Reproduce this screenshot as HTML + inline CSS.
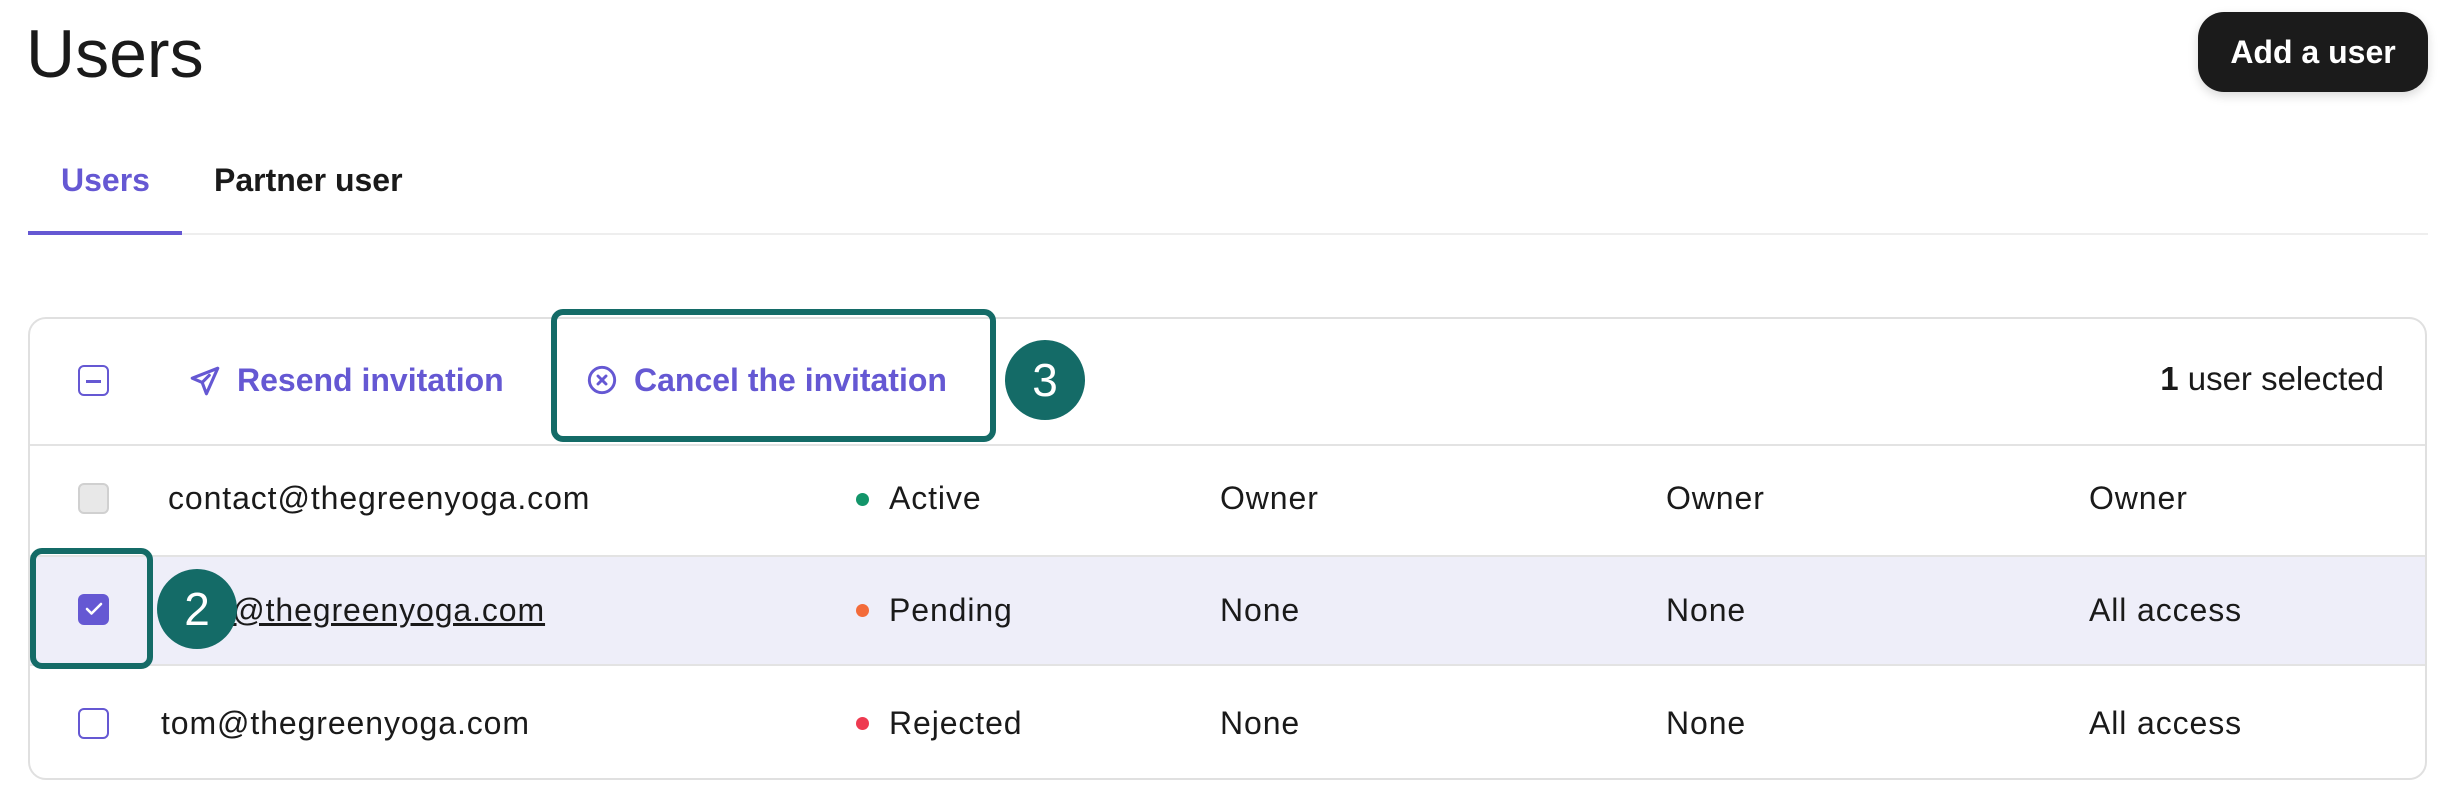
<!DOCTYPE html>
<html><head><meta charset="utf-8"><style>
*{margin:0;padding:0;box-sizing:border-box}
body{width:2450px;height:800px;background:#fff;position:relative;overflow:hidden;font-family:"Liberation Sans",Arial,sans-serif;color:#1a1a1a}
.a{position:absolute;white-space:nowrap}
.t{font-size:32px;letter-spacing:0.9px;line-height:40px}
.p{color:#6558d3;font-weight:bold;font-size:32px;line-height:40px}
.cb{position:absolute;width:31px;height:31px;border-radius:6px}
.dot{position:absolute;width:13px;height:13px;border-radius:50%}
.badge{position:absolute;width:80px;height:80px;border-radius:50%;background:#146b67;color:#fff;font-size:46px;line-height:80px;text-align:center}
</style></head><body>
<div class="a" style="left:26px;top:14px;font-size:68px;line-height:80px">Users</div>
<div class="a" style="left:2198px;top:12px;width:230px;height:80px;border-radius:26px;background:#1b1b1b;box-shadow:0 4px 10px rgba(0,0,0,.15);color:#fff;font-weight:bold;font-size:32px;line-height:80px;text-align:center">Add a user</div>

<div class="a" style="left:61px;top:160px;font-size:32px;font-weight:bold;color:#6558d3;line-height:40px">Users</div>
<div class="a" style="left:214px;top:160px;font-size:32px;font-weight:bold;line-height:40px">Partner user</div>
<div class="a" style="left:28px;top:233px;width:2400px;height:2px;background:#eeeeee"></div>
<div class="a" style="left:28px;top:231px;width:154px;height:4px;background:#6558d3"></div>

<div class="a" style="left:28px;top:317px;width:2399px;height:463px;border:2px solid #e0e0e0;border-radius:18px;overflow:hidden">
  <div class="a" style="left:0;top:125px;width:100%;height:2px;background:#e3e3e3"></div>
  <div class="a" style="left:0;top:236px;width:100%;height:111px;background:#eeeef9;border-top:2px solid #e3e3e3;border-bottom:2px solid #e3e3e3"></div>
</div>

<!-- header row -->
<div class="cb" style="left:78px;top:365px;border:2.5px solid #6558d3"></div>
<div class="a" style="left:86px;top:380px;width:15px;height:3px;background:#6558d3"></div>
<svg class="a" style="left:188px;top:364px" width="34" height="34" viewBox="0 0 24 24" fill="none" stroke="#6558d3" stroke-width="2.2" stroke-linejoin="round" stroke-linecap="round"><path d="M21 3L3 10l7 3 3 8 8-18z"/><path d="M10 13l5-5"/></svg>
<div class="a p" style="left:237px;top:360px">Resend invitation</div>
<svg class="a" style="left:586px;top:364px" width="32" height="32" viewBox="0 0 24 24" fill="none" stroke="#6558d3" stroke-width="2.2" stroke-linecap="round"><circle cx="12" cy="12" r="9.5"/><path d="M9 9l6 6M15 9l-6 6"/></svg>
<div class="a p" style="left:634px;top:360px">Cancel the invitation</div>
<div class="a" style="left:551px;top:309px;width:445px;height:133px;border:6px solid #146b67;border-radius:12px"></div>
<div class="badge" style="left:1005px;top:340px">3</div>
<div class="a" style="right:66px;top:359px;font-size:33px;line-height:40px"><b>1</b> user selected</div>

<!-- row1 -->
<div class="cb" style="left:78px;top:483px;background:#e8e8e8;border:2px solid #d0d0d0"></div>
<div class="a t" style="left:168px;top:478px">contact@thegreenyoga.com</div>
<div class="dot" style="left:856px;top:493px;background:#13956a"></div>
<div class="a t" style="left:889px;top:478px">Active</div>
<div class="a t" style="left:1220px;top:478px">Owner</div>
<div class="a t" style="left:1666px;top:478px">Owner</div>
<div class="a t" style="left:2089px;top:478px">Owner</div>

<!-- row2 -->
<div class="cb" style="left:78px;top:594px;background:#6558d3"></div>
<svg class="a" style="left:83px;top:598px" width="22" height="22" viewBox="0 0 22 22" fill="none" stroke="#fff" stroke-width="2.6" stroke-linecap="round" stroke-linejoin="round"><path d="M4 11l4.5 4.5L18 6"/></svg>
<div class="a t" style="left:177px;top:590px;text-decoration:underline">tina@thegreenyoga.com</div>
<div class="dot" style="left:856px;top:604px;background:#f36b3a"></div>
<div class="a t" style="left:889px;top:590px">Pending</div>
<div class="a t" style="left:1220px;top:590px">None</div>
<div class="a t" style="left:1666px;top:590px">None</div>
<div class="a t" style="left:2089px;top:590px">All access</div>
<div class="a" style="left:30px;top:548px;width:123px;height:121px;border:6px solid #146b67;border-radius:12px"></div>
<div class="badge" style="left:157px;top:569px">2</div>

<!-- row3 -->
<div class="cb" style="left:78px;top:708px;border:2.5px solid #6558d3;background:#fff"></div>
<div class="a t" style="left:161px;top:703px">tom@thegreenyoga.com</div>
<div class="dot" style="left:856px;top:717px;background:#ee3a50"></div>
<div class="a t" style="left:889px;top:703px">Rejected</div>
<div class="a t" style="left:1220px;top:703px">None</div>
<div class="a t" style="left:1666px;top:703px">None</div>
<div class="a t" style="left:2089px;top:703px">All access</div>
</body></html>
